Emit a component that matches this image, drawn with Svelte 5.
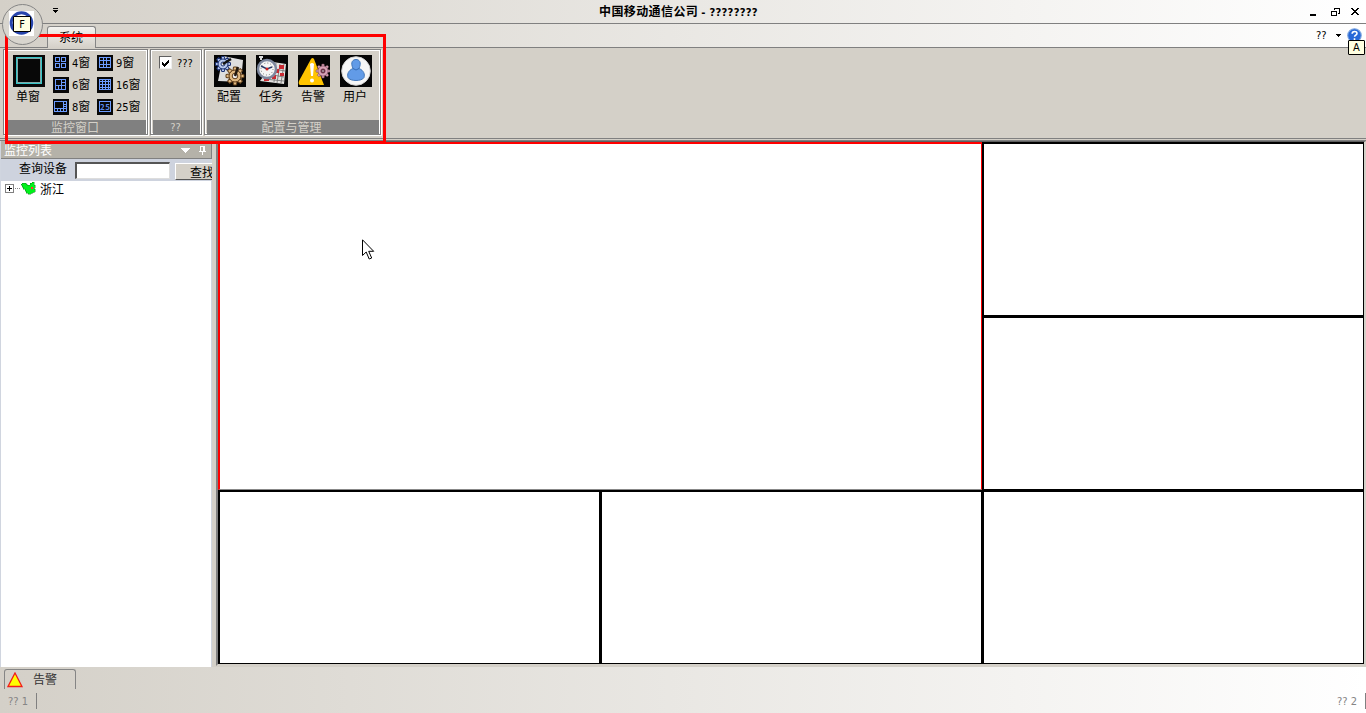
<script>
  const layouts = [
    { n: 4, label: '4' }, { n: 9, label: '9' },
    { n: 6, label: '6' }, { n: 16, label: '16' },
    { n: 8, label: '8' }, { n: 25, label: '25' }
  ];
  const paths = {
    4: 'M2.5 2.5h4v4h-4zM8.5 2.5h4v4h-4zM2.5 8.5h4v4h-4zM8.5 8.5h4v4h-4z',
    6: 'M2.5 2.5h10v10h-10zM2.5 8.5h10M8.5 2.5v10M8.5 5.5h4M5.5 8.5v4',
    8: 'M1.5 2.5h12v10h-12zM1.5 9.5h12M10.5 2.5v10M10.5 5.5h3M10.5 7.5h3M4.5 9.5v3M7.5 9.5v3',
    9: 'M2.5 2.5h11v10h-11zM2.5 5.5h11M2.5 9.5h11M6.5 2.5v10M9.5 2.5v10',
    16: 'M2.5 2.5h11v10h-11zM2.5 4.5h11M2.5 7.5h11M2.5 10.5h11M5.5 2.5v10M8.5 2.5v10M11.5 2.5v10',
    25: 'M2.5 2.5h11v10h-11z'
  };
  const gear = [0, 45, 90, 135, 180, 225, 270, 315];
  const tools = ['配置', '任务', '告警', '用户'];
</script>

<div class="window">
  <header class="title">
    <svg class="quick" width="7" height="6" shape-rendering="crispEdges"><path d="M1 0h5v1H1zM1 2h5v1H1zM2 3h3v1H2zM3 4h1v1H3z" /></svg>
    <b>中国移动通信公司 <span class="lat">- ????????</span></b>
    <svg class="controls" width="58" height="12" viewBox="0 0 58 12" shape-rendering="crispEdges">
      <path d="M4 8h6v2H4z" />
      <path d="M28.500 4V2h5v5h-2M28 2.500h6M25.500 5.500h5v4h-5zM25 5.500h6" fill="none" stroke="#000" />
      <path d="M45 2h2v1h1v1h2V3h1V2h2v1h-1v1h-1v1h-1v1h1v1h1v1h1v1h-2V8h-1V7h-2v1h-1v1h-2V8h1V7h1V6h1V5h-1V4h-1V3h-1z" />
    </svg>
    <div class="orb">
      <svg width="42" height="42" viewBox="0 0 42 42">
        <circle cx="20.500" cy="20.500" r="20" fill="#d8d5ce" stroke="#858585" />
        <path fill="#fff" d="M7 7h25v25H7z" /><circle cx="19.500" cy="19" r="10.300" fill="none" stroke="#2745ad" stroke-width="3" />
      </svg>
      <span class="keytip">F</span>
    </div>
  </header>

  <nav class="tabs">
    <span class="tab">系统</span>
    <span class="style lat">??</span>
    <svg class="drop" width="5" height="3" shape-rendering="crispEdges"><path d="M0 0h5v1H0zM1 1h3v1H1zM2 2h1v1H2z" /></svg>
    <div class="help">
      <svg width="15" height="15" viewBox="0 0 14 14"><circle cx="7" cy="7" r="6.300" fill="#2868d8" stroke="#7ea6df" /><path d="M4.800 5.400c0-3 4.700-2.800 4.500-.2 0 1.500-2.200 1.500-2.200 3M7 9.500v1.600" fill="none" stroke="#fff" stroke-width="1.500" /></svg>
      <span class="keytip small">A</span>
    </div>
  </nav>

  <section class="ribbon">
    <div class="group windows">
      <div class="content">
        <div class="single">
          <svg width="32" height="32" shape-rendering="crispEdges"><path fill="#080808" d="M0 0h32v32H0z" /><path d="M3.500 2.500h25v26h-25z" fill="none" stroke="#36c6c8" /><path d="M4.500 3.500h23v24h-23z" fill="none" stroke="#83a6a6" /><path d="M5 4h22v23H5z" fill="#080808" /></svg>
          <span>单窗</span>
        </div>
        <div class="layouts">
          {#each layouts as item}
            <div class="layout">
              <svg width="16" height="16" shape-rendering="crispEdges"><path fill="#080808" d="M0 0h16v16H0z" /><path d={paths[item.n]} fill="none" stroke="#6c9cff" />
                {#if item.n === 25}<text x="3" y="11" font-size="8" font-weight="bold" textLength="10" fill="#5b8bea">25</text>{/if}
              </svg>
              <span><span class="lat">{item.label}</span>窗</span>
            </div>
          {/each}
        </div>
      </div>
      <div class="caption">监控窗口</div>
    </div>
    <div class="group option">
      <div class="content">
        <span class="check"><svg width="9" height="9" shape-rendering="crispEdges"><path d="M1 3h1v1h1v1h1V4h1V3h1V2h1V1h1v3H7v1H6v1H5v1H4v1H3V7H2V6H1z" /></svg></span><span class="lat">???</span>
      </div>
      <div class="caption lat">??</div>
    </div>
    <div class="group manage">
      <div class="content">
        {#each tools as tool, i}
          <div class="tool">
            <svg width="32" height="32" viewBox="0 0 32 32">
              <path fill="#050505" d="M0 0h32v32H0z" />
              {#if i === 0}
                <path fill="#dedede" d="M9 1l20 4-2 22-23-1z" />
                <g transform="translate(9 9)" fill="#b9c9ed" stroke="#1c3274" stroke-width="1">
                  {#each gear as a}<path transform="rotate({a})" d="M-1.800-4l.5-3.500h2.600l.5 3.500z" />{/each}
                  <circle r="5" /><circle r="2" fill="#eee" />
                </g>
                <path d="M9 9l8-5" stroke="#111" stroke-width="2.500" />
                <g transform="translate(21 21)" fill="#e0b981" stroke="#5e3c19" stroke-width="1">
                  {#each gear as a}<path transform="rotate({a})" d="M-2-5.500l.5-3.500h3l.5 3.500z" />{/each}
                  <circle r="6" /><circle r="2.800" fill="#eee" />
                </g>
                <path d="M21 21l3-9" stroke="#21170d" stroke-width="2.500" />
              {:else if i === 1}
                <path fill="#e5e3e1" d="M17 7l13 2-2 20-24-3 5-7z" />
                <path d="M20 8l-2 19M24 9l-3 19M28 9l-3 19M8 24l20 2M17 20l11 2M18 14l11 2" stroke="#777" stroke-width=".9" />
                <path fill="#c92a32" d="M23 10h5v4h-5zM19 14h4v4h-4zM16 20h4v4h-4zM8 23h5v3H8zM24 18h4v3h-4z" />
                <circle cx="11" cy="14" r="9" fill="#f5f5f5" stroke="#7d879e" stroke-width="2.500" />
                <circle cx="11" cy="14" r="6" fill="none" stroke="#777" stroke-dasharray="1 2.100" />
                <path d="M5 11l6 3 5-2" fill="none" stroke="#263866" stroke-width="1.500" /><circle cx="11" cy="14" r="1.500" fill="#c22" />
                <path d="M3 2h4M5 2v3" stroke="#ddd" stroke-width="2" />
              {:else if i === 2}
                <path fill="#ffc400" d="M13 4q1.500-2 3 0l10 26H2q-2-1-1-4z" />
                <path d="M12 9q2-2 4 0l-1 12h-2z" fill="#fff" /><circle cx="14" cy="25.500" r="2" fill="#fff" />
                <g transform="translate(25 16)" fill="#d9a2b7" stroke="#704052" stroke-width=".5">
                  {#each gear as a}<path transform="rotate({a})" d="M-1.500-4l.4-3h2.200l.4 3z" />{/each}
                  <circle r="5" /><circle r="2.300" fill="#692f44" /><circle r="1" fill="#ddd" />
                </g>
              {:else}
                <circle cx="16" cy="16" r="14.300" fill="#f6f6f6" stroke="#d0d0d0" />
                <path fill="#629be7" stroke="#4377b9" d="M13 13.500C10 7 13 4.500 16 4.500s6 2.500 3 9c5 2 6 6 5 9-2 4-14 4-16 0-1-3 0-7 5-9z" /><path d="M13 13.500q3 3 6 0" fill="none" stroke="#356cb6" />
              {/if}
            </svg>
            <span>{tool}</span>
          </div>
        {/each}
      </div>
      <div class="caption">配置与管理</div>
    </div>
  </section>

  <main>
    <aside>
      <div class="panel-head"><span>监控列表</span>
        <svg width="27" height="10" shape-rendering="crispEdges"><path fill="#fff" d="M0 3h9v1H8v1H7v1H6v1H5v1H4V7H3V6H2V5H1V4H0zM19 1h5v5h1v1h-3v3h-1V7h-3V6h1zM20 2v4h2V2z" fill-rule="evenodd" /></svg>
      </div>
      <div class="query"><span>查询设备</span><i></i><button>查找</button></div>
      <div class="tree">
        <svg width="31" height="14" shape-rendering="crispEdges"><path d="M.5 3.500h8v8h-8z" fill="#fff" stroke="#808080" /><path d="M2 7h5v1H2zM4 5h1v5H4z" /><path d="M10 7.500h6" stroke="#888" stroke-dasharray="1 1" /><path d="M17 2h4v1h1v1h3V2h2V1h2v3h1v3h-1v1h1v3h-2v1h-2v1h-3v-1h-2v-2h-1V8h-2V6h-1V4h-1V3h1z" fill="#00f01b" stroke="#087a12" stroke-width=".4" /><path fill="#f33" d="M26 6h2v2h-2z" /></svg>
        <span>浙江</span>
      </div>
    </aside>
    <div class="video">
      <div class="cell active"></div><div class="cell"></div><div class="cell"></div>
      <div class="cell"></div><div class="cell"></div><div class="cell"></div>
    </div>
  </main>

  <div class="dock">
    <div class="alarm"><svg width="17" height="16"><path d="M8 1l7 13.500H1z" fill="#ff0" stroke="#f21c1c" stroke-width="1.300" /></svg><span>告警</span></div>
  </div>
  <footer class="lat"><span>?? 1</span><span>?? 2</span></footer>

  <div class="outline"></div>
  <svg class="cursor" width="13" height="22" viewBox="0 0 13 22"><path d="M.5.800v15.700l3.700-3.500 3 7 2.500-1-3-6.700h5z" fill="#fff" stroke="#000" /></svg>
</div>

<style>
  :global(body) { margin: 0; overflow: hidden; }
  * { box-sizing: border-box; }
  .window { position: relative; width: 1366px; height: 713px; display: flex; flex-direction: column; background: linear-gradient(90deg, #d4d0c8, #fff); font: 12px/14px "Noto Sans CJK SC", sans-serif; color: #000; overflow: hidden; white-space: nowrap; }
  svg { display: block; flex: none; }
  .lat { font-family: "DejaVu Sans Condensed", "DejaVu Sans", sans-serif; font-size: 11px; }
  .title { position: relative; height: 24px; flex: none; display: flex; align-items: center; border-bottom: 1px solid #808080; padding-left: 52px; }
  .title b { margin-left: 540px; width: 170px; letter-spacing: .4px; }
  .title b .lat { letter-spacing: .25px; font-family: "DejaVu Sans", sans-serif; font-size: 10px; }
  .controls { margin-left: auto; margin-right: 2px; }
  .quick { margin-bottom: 1px; }
  .orb { position: absolute; left: 2px; top: 4px; z-index: 3; }
  .keytip { position: absolute; left: 11px; top: 12px; width: 18px; height: 16px; border: 1px solid #000; border-radius: 1px; background: #ffffe1; font: 11px/15px "DejaVu Sans Condensed", sans-serif; text-align: center; }
  .keytip.small { left: 1px; top: 12px; width: 17px; height: 15px; line-height: 14px; z-index: 4; }
  .tabs { height: 24px; flex: none; display: flex; align-items: center; border-bottom: 1px solid #808080; padding-left: 47px; }
  .tab { align-self: flex-end; width: 49px; height: 22px; margin-bottom: -1px; padding: 3px 0 0 11px; background: linear-gradient(#f4f3f0, #d4d0c8); border: 1px solid #858585; border-bottom: 0; border-radius: 3px 3px 0 0; }
  .style { margin-left: auto; width: 20px; }
  .help { position: relative; margin: 0 4px 1px 6px; }
  .ribbon { height: 93px; flex: none; display: flex; padding: 1px 0 0 3px; gap: 2px; background: #d4d0c8; border-bottom: 3px double #808080; }
  .group { height: 86px; border: 1px solid #808080; box-shadow: inset 1px 1px #fff, inset -1px -1px #fff, 1px 1px #fff; padding: 2px 1px 0 2px; display: flex; flex-direction: column; }
  .windows { width: 145px; } .option { width: 52px; } .manage { width: 177px; }
  .content { height: 68px; flex: none; display: flex; }
  .caption { height: 14px; background: #808080; color: #d4d0c8; text-align: center; line-height: 14px; }
  .windows .caption { padding-right: 2px; }
  .manage .caption { padding-right: 3px; }
  .option .caption { padding-right: 2px; line-height: 15px; }
  .single { width: 47px; padding: 3px 0 0 7px; display: flex; flex-direction: column; gap: 2px; }
  .single span { margin-left: 3px; }
  .layouts { display: grid; grid-template-columns: 44px 44px; grid-auto-rows: 22px; padding-top: 3px; }
  .layout { display: flex; align-items: flex-start; gap: 3px; }
  .layout > span { line-height: 14px; }
  .option .content { padding: 4px 0 0 6px; gap: 5px; line-height: 15px; }
  .check { width: 13px; height: 13px; background: #fff; border: 1px solid; border-color: #606060 #eee #eee #606060; padding: 1px; }
  .check svg { margin-top: 1px; }
  .manage .content { padding: 3px 0 0 7px; gap: 10px; }
  .tool { width: 32px; display: flex; flex-direction: column; gap: 2px; }
  .tool span { margin-left: 3px; }
  main { height: 526px; flex: none; display: flex; background: #d4d0c8; }
  aside { flex: none; width: 212px; display: flex; flex-direction: column; border-left: 1px solid #d0d5df; overflow: hidden; }
  .panel-head { height: 18px; flex: none; display: flex; background: #b5b2a9; border-bottom: 1px solid #808080; border-right: 1px solid #808080; color: #fff; padding: 2px 3px 0 3px; justify-content: space-between; }
  .panel-head svg { margin-top: 2px; }
  .query { height: 22px; flex: none; display: flex; background: #ced3de; padding: 2px 0 0 18px; }
  .query span { flex: none; width: 56px; }
  .query i { flex: none; width: 95px; height: 17px; background: #fff; border: 2px solid; border-color: #555 #ddd #ddd #555; border-right-width: 1px; border-bottom-width: 1px; margin-top: 1px; }
  .query button { flex: none; width: 50px; height: 17px; margin: 2px 0 0 5px; padding: 0 0 0 14px; border: 1px solid; border-color: #fff #555 #555 #fff; background: #d4d0c8; font: inherit; line-height: 14px; text-align: left; }
  .tree { flex: 1; background: #fff; border-right: 1px solid #d0d5df; display: flex; padding: 1px 0 0 4px; gap: 4px; }
  .tree svg { margin-top: -1px; }
  .video { margin-left: 4px; width: 1150px; height: 525px; border: solid; border-width: 1px 2px 2px; border-color: #606060 #d4d0c8 #d4d0c8 #808080; background: #000; display: grid; grid-template-columns: repeat(3, 382px); grid-template-rows: repeat(3, 174px); }
  .cell { background: #fff; border: solid #000; border-width: 2px 1px 1px 2px; }
  .active { grid-column: 1 / 3; grid-row: 1 / 3; border-color: #f00; border-bottom: 1px solid #888; }
  .dock { height: 24px; flex: none; padding: 2px 0 0 4px; }
  .alarm { width: 72px; height: 20px; border: 1px solid #858585; border-bottom: 0; border-radius: 3px 3px 0 0; display: flex; padding: 2px 0 0 2px; gap: 9px; color: #333; }
  footer { height: 22px; flex: none; display: flex; justify-content: space-between; color: #858585; padding: 2px 0 0 8px; line-height: 17px; }
  footer span { border-right: 1px solid #808080; height: 16px; padding-right: 8px; }
  .outline { position: absolute; left: 5px; top: 34px; width: 381px; height: 110px; border: 3px solid #f00; z-index: 2; }
  .cursor { position: absolute; left: 362px; top: 239px; }
</style>
